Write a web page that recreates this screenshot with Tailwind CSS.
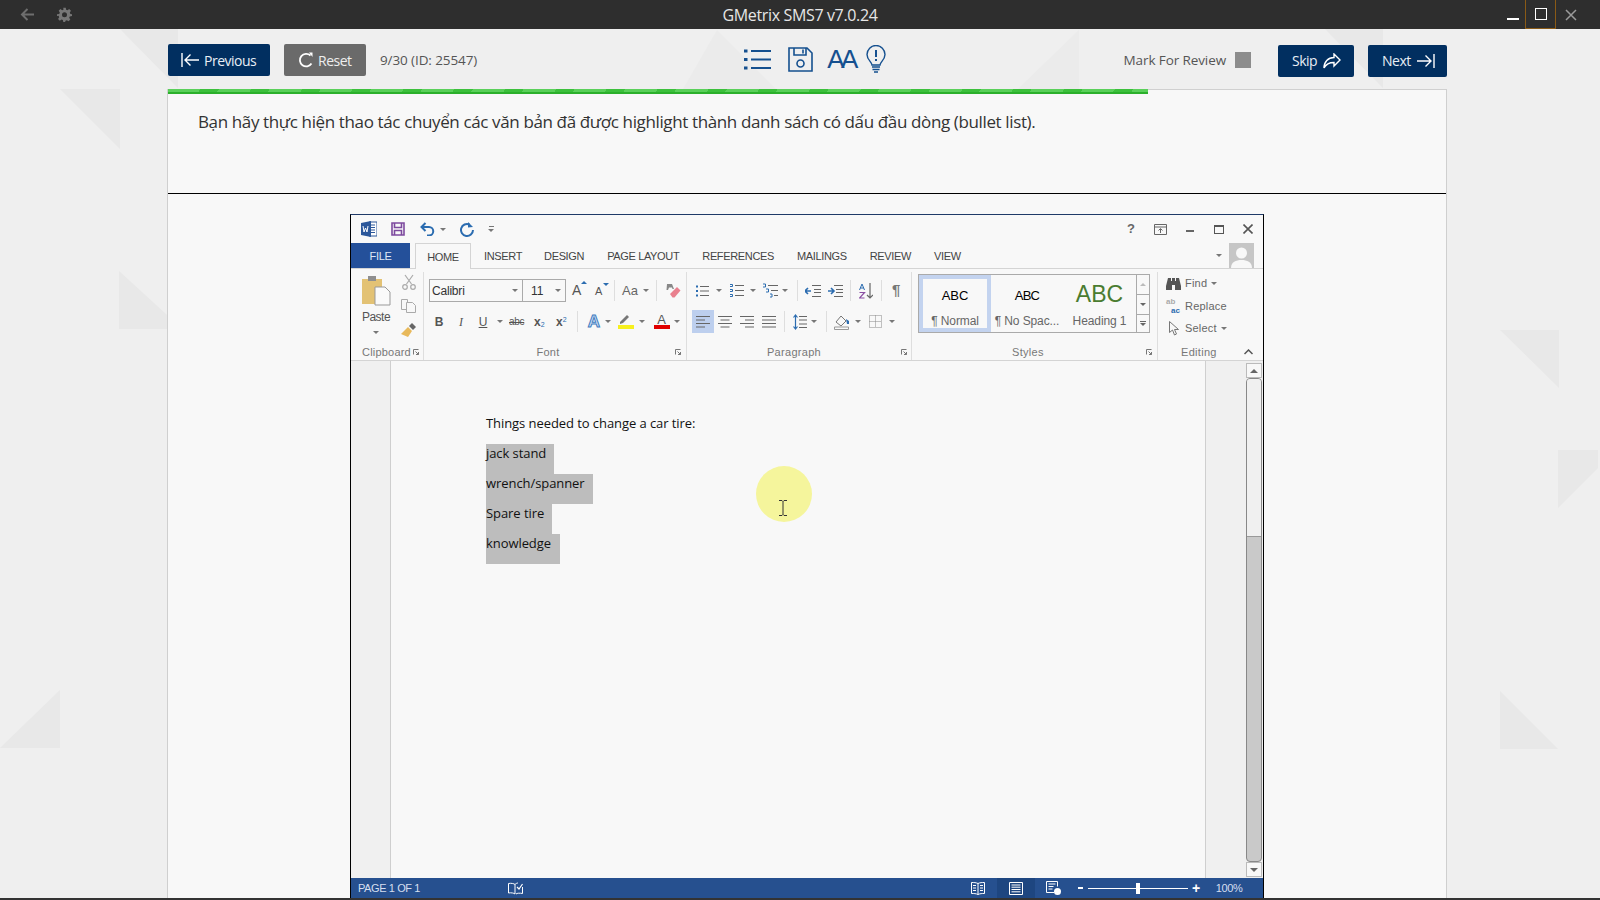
<!DOCTYPE html>
<html lang="vi">
<head>
  <meta charset="UTF-8" />
  <title>GMetrix SMS7</title>
  <script src="https://cdn.jsdelivr.net/npm/@tailwindcss/browser@4"></script>
</head>
<body class="m-0">
<div class="relative w-[1600px] h-[900px] overflow-hidden bg-[#efefef] font-['Open_Sans',sans-serif]">

  <!-- background triangles -->
  <svg class="absolute left-0 top-0" width="1600" height="900" fill="#e8e8e8">
    <polygon points="60,89 120,89 120,149"/>
    <polygon points="120,29 178,29 178,88"/>
    <polygon points="119,271 167,315 167,329 119,329"/>
    <polygon points="0,748 60,690 60,748"/>
    <polygon points="717,30 683,89 776,89" fill="#ebebeb"/>
    <polygon points="1079,30 1018,89 1079,89" fill="#ebebeb"/>
    <polygon points="1325,29 1383,29 1383,88"/>
    <polygon points="1500,330 1559,330 1559,388"/>
    <polygon points="1558,450 1598,450 1598,468 1558,508"/>
    <polygon points="1500,691 1558,749 1500,749"/>
  </svg>

  <div class="relative flex flex-col h-full">
    <!-- title bar -->
    <div class="relative flex items-center justify-center h-[29px] bg-[#2e2e2e] text-[#e6e6e6] text-[16px] tracking-[-0.35px] shrink-0">
      <svg class="absolute left-[20px] top-[7px]" width="15" height="15" viewBox="0 0 15 15" fill="none" stroke="#6e6e6e" stroke-width="2"><path d="M14 7.500H2M7.500 2 2 7.500 7.500 13"/></svg>
      <svg class="absolute left-[57px] top-[7px]" width="15" height="15" viewBox="0 0 24 24" fill="#777"><path d="M10 1h4l.6 3.200 2.200.9L19.500 3.300l2.800 2.800-1.800 2.700.9 2.200L24 11.500v3l-3.600.6-.9 2.200 1.800 2.700-2.800 2.800-2.700-1.800-2.200.9L13 24h-3l-.6-3.100-2.200-.9-2.700 1.800-2.800-2.800 1.800-2.700-.9-2.200L0 14.500v-3l3.600-.5.9-2.200L2.700 6.100l2.800-2.800 2.700 1.800 2.200-.9zM12 8.500a4 4 0 1 0 0 8 4 4 0 0 0 0-8z"/></svg>
      GMetrix SMS7 v7.0.24
      <div class="absolute right-0 top-0 h-[29px] flex">
        <div class="w-[25px] flex items-end justify-center pb-[9px]"><span class="block w-[12px] h-[2px] bg-white"></span></div>
        <div class="w-[31px] h-[29px] border-x border-b border-[#8a5a16] flex items-center justify-center"><span class="block w-[12px] h-[12px] border border-white"></span></div>
        <div class="w-[44px] flex items-center pl-[9px]">
          <svg width="12" height="12" viewBox="0 0 12 12" stroke="#9a9a9a" stroke-width="1.500"><path d="M1 1l10 10M11 1 1 11"/></svg>
        </div>
      </div>
    </div>

    <!-- toolbar -->
    <div class="relative flex items-start h-[60px] pl-[168px] pr-[153px] shrink-0 text-[14px] tracking-[-0.5px]">
      <button class="mt-[15px] flex items-center w-[102px] h-[32px] pl-[13px] rounded-[2px] bg-[#012f60] text-[#e8eef5]">
        <svg width="18" height="16" viewBox="0 0 18 16" fill="none" stroke="#fff" stroke-width="1.400"><path d="M1 1v14M18 8H4M9.500 2.500 4 8l5.500 5.500"/></svg>
        <span class="ml-[5px]">Previous</span>
      </button>
      <button class="mt-[15px] ml-[14px] flex items-center w-[82px] h-[32px] pl-[14px] rounded-[2px] bg-[#6a6a6a] text-[#eeeeee]">
        <svg width="16" height="16" viewBox="0 0 16 16" fill="none" stroke="#fff" stroke-width="1.800"><path d="M13.500 11.500A6.300 6.300 0 1 1 12.500 3.500"/><path d="M11 0.500h3.500V5z" fill="#fff" stroke="none"/></svg>
        <span class="ml-[4px]">Reset</span>
      </button>
      <span class="mt-[15px] ml-[14px] leading-[32px] text-[#555] text-[13.500px] tracking-[-0.1px]">9/30 (ID: 25547)</span>

      <!-- centre icons -->
      <div class="flex items-start ml-[267px] mt-[16px]">
        <svg class="mt-[4px]" width="27" height="21" viewBox="0 0 27 21" fill="none" stroke="#15508f" stroke-width="2"><path d="M7 2h20M7 10.500h20M7 19h20"/><path d="M0 2h3.500M0 10.500h3.500M0 19h3.500" stroke-width="3"/></svg>
        <svg class="ml-[17px] mt-[2px]" width="25" height="25" viewBox="0 0 25 25" fill="none" stroke="#15508f" stroke-width="1.600"><path d="M1 1h18l5 5v18H1z"/><path d="M6 1v7h12V1M15 2.500v4"/><circle cx="12.500" cy="16.500" r="3.500"/></svg>
        <span class="ml-[14px] text-[#15508f] text-[26px] leading-[28px] tracking-[-3.500px] font-['Liberation_Sans',sans-serif]">AA</span>
        <svg class="ml-[11px]" width="20" height="28" viewBox="0 0 20 28" fill="none" stroke="#15508f" stroke-width="1.400"><path d="M6 20c0-3-5-5-5-10.500a9 9 0 0 1 18 0C19 15 14 17 14 20z"/><path d="M10 5v7M10 14v2" stroke-width="2"/><path d="M6 22h8M6.500 24.500h7M8 27h4" stroke-width="1.600"/></svg>
      </div>

      <span class="mt-[15px] ml-auto leading-[32px] text-[#555] text-[13.500px] tracking-[-0.1px]">Mark For Review</span>
      <span class="mt-[23px] ml-[9px] block w-[16px] h-[16px] bg-[#8c8c8c]"></span>
      <button class="mt-[16px] ml-[27px] flex items-center w-[76px] h-[32px] pl-[14px] pb-[1px] rounded-[2px] bg-[#012f60] text-[#e8eef5]">
        <span>Skip</span>
        <svg class="ml-[6px]" width="18" height="16" viewBox="0 0 18 16" fill="none" stroke="#fff" stroke-width="1.400"><path d="M11 1l6 6-6 6V9.500C6 9.500 3 11 1 15c0-6 4-10.500 10-10.500z"/></svg>
      </button>
      <button class="mt-[16px] ml-[14px] flex items-center w-[79px] h-[32px] pl-[14px] pb-[1px] rounded-[2px] bg-[#012f60] text-[#e8eef5]">
        <span>Next</span>
        <svg class="ml-[6px]" width="18" height="16" viewBox="0 0 18 16" fill="none" stroke="#fff" stroke-width="1.400"><path d="M17 1v14M0 8h14M8.500 2.500 14 8l-5.500 5.500"/></svg>
      </button>
    </div>

    <!-- question card -->
    <div class="flex-1 min-h-0 ml-[167px] w-[1280px] border-x border-[#cfcfcf] bg-[#f8f8f8] flex flex-col">
      <div class="h-[5px] shrink-0 flex">
        <div class="w-[980px] flex flex-col">
          <div class="h-[3px] bg-[repeating-linear-gradient(120deg,#5ad05a_0,#5ad05a_28px,#3cc03c_28px,#3cc03c_44px)]"></div>
          <div class="h-[2px] bg-[#2bb02b]"></div>
        </div>
        <div class="flex-1 border-t border-[#d0d0d0]"></div>
      </div>
      <div class="h-[100px] shrink-0 border-b border-black pl-[30px] pt-[15px] text-[17px] leading-[26px] text-[#333] tracking-[-0.37px]">
        Bạn hãy thực hiện thao tác chuyển các văn bản đã được highlight thành danh sách có dấu đầu dòng (bullet list).
      </div>

      <!-- word window -->
      <div class="relative ml-[182px] mt-[20px] w-[914px] h-[684px] shrink-0 border-x border-t border-black border-t-[#1f3a68] bg-[#f8f8f8] flex flex-col font-['Liberation_Sans',sans-serif] text-[#555]">

        <!-- quick access -->
        <div class="relative flex items-center h-[28px] shrink-0 pl-[10px]">
          <svg width="16" height="16" viewBox="0 0 16 16"><path d="M8 1h8v14H8z" fill="#fff" stroke="#2b579a"/><path d="M10 4h4M10 6.500h4M10 9h4M10 11.500h4" stroke="#2b579a"/><path d="M0 2 10 0v16L0 14z" fill="#2b579a"/><path d="M2 5l1 6 1.500-4 1.500 4 1-6" stroke="#fff" fill="none"/></svg>
          <svg class="ml-[14px]" width="14" height="14" viewBox="0 0 14 14" fill="none" stroke="#7d4a9e" stroke-width="1.600"><path d="M1 1h12v12H1z"/><path d="M3.500 1v4.500h7V1M3.500 13V8.500h7V13"/></svg>
          <svg class="ml-[15px]" width="15" height="14" viewBox="0 0 15 14" fill="none" stroke="#2b6cb0" stroke-width="2"><path d="M5.500 1 1.500 5l4 4"/><path d="M2 5h7a4.200 4.200 0 0 1 0 8.500H7"/></svg>
          <span class="ml-[5px] border-x-[3px] border-t-[3px] border-x-transparent border-t-[#777]"></span>
          <svg class="ml-[14px]" width="14" height="15" viewBox="0 0 14 15" fill="none" stroke="#2b6cb0" stroke-width="2"><path d="M9.500 2.500A6 6 0 1 0 13 8"/><path d="M8 0v5.500l5-.5z" fill="#2b6cb0" stroke="none"/></svg>
          <span class="ml-[14px] w-[6px] flex flex-col items-center gap-[2px]"><span class="block w-[5px] h-[1px] bg-[#777]"></span><span class="border-x-[3px] border-t-[3px] border-x-transparent border-t-[#777]"></span></span>

          <div class="ml-auto flex items-center pr-[10px]">
            <span class="text-[13px] font-bold text-[#666] mr-[19px]">?</span>
            <svg class="mr-[19px]" width="13" height="11" viewBox="0 0 13 11" fill="none" stroke="#666"><path d="M.5.500h12v10H.5zM.5 3h12M6.500 9V5M4.500 6.500l2-2 2 2"/></svg>
            <span class="block w-[8px] h-[2px] bg-[#666] mr-[20px] mt-[3px]"></span>
            <span class="block w-[10px] h-[9px] border border-t-2 border-[#555] mr-[19px]"></span>
            <svg width="10" height="10" viewBox="0 0 10 10" stroke="#555" stroke-width="1.600"><path d="M.5.500l9 9M9.500.500l-9 9"/></svg>
          </div>
        </div>

        <!-- tabs -->
        <div class="relative flex items-end h-[26px] shrink-0 border-b border-[#d4d4d4] text-[11px] tracking-[-0.35px] text-[#444]">
          <div class="w-[59px] h-[25px] pt-[1px] bg-[#24509a] text-[#dfe8f6] flex items-center justify-center">FILE</div>
          <div class="ml-[5px] w-[56px] h-[26px] -mb-px pt-[1px] border-x border-t border-[#d4d4d4] bg-[#f8f8f8] flex items-center justify-center">HOME</div>
          <div class="flex h-[25px] pt-[2px] items-center">
            <span class="ml-[13px]">INSERT</span>
            <span class="ml-[22px]">DESIGN</span>
            <span class="ml-[23px]">PAGE LAYOUT</span>
            <span class="ml-[23px]">REFERENCES</span>
            <span class="ml-[23px]">MAILINGS</span>
            <span class="ml-[23px]">REVIEW</span>
            <span class="ml-[23px]">VIEW</span>
          </div>
          <div class="ml-auto flex items-center h-[25px] pr-[9px]">
            <span class="border-x-[3px] border-t-[3px] border-x-transparent border-t-[#777] mr-[7px]"></span>
            <svg width="25" height="25" viewBox="0 0 25 25"><path d="M0 0h25v25H0z" fill="#c6c6c6"/><circle cx="12.500" cy="10" r="5.500" fill="#f8f8f8"/><path d="M2 25c0-6 5-8 10.500-8S23 19 23 25z" fill="#f8f8f8"/></svg>
          </div>
        </div>

        <!-- ribbon -->
        <div class="flex h-[92px] shrink-0 border-b border-[#d4d4d4] text-[#666]">

          <!-- clipboard -->
          <div class="relative w-[73px] mt-[3px] border-r border-[#dedede] flex flex-col">
            <div class="flex flex-1 min-h-0">
              <div class="w-[50px] flex flex-col items-center">
                <svg class="mt-[3px] ml-[1px]" width="29" height="31" viewBox="0 0 29 31"><path d="M0 4h20v25H0z" fill="#e3c274"/><path d="M6 1h8v5H6z" fill="#8f8f8f"/><path d="M13 12h10l5 5v13H13z" fill="#fafafa" stroke="#999"/></svg>
                <span class="mt-[4px] text-[12px] leading-[14px] tracking-[-0.5px] text-[#555]">Paste</span>
                <span class="mt-[7px] border-x-[3px] border-t-[3px] border-x-transparent border-t-[#777]"></span>
              </div>
              <div class="flex flex-col items-center pt-[2px]">
                <svg class="ml-[1px]" width="14" height="16" viewBox="0 0 14 16" fill="none" stroke="#aaa" stroke-width="1.200"><path d="M3 1l6.500 9M11 1 4.500 10"/><circle cx="3" cy="13" r="2.300"/><circle cx="11" cy="13" r="2.300"/></svg>
                <svg class="mt-[9px]" width="15" height="14" viewBox="0 0 15 14" fill="#f8f8f8" stroke="#aaa"><path d="M.5.500h6v10h-6z"/><path d="M5.500 3.500h6l3 3v7h-9z"/></svg>
                <svg class="mt-[10px]" width="15" height="14" viewBox="0 0 15 14"><path d="M0 11 7 4l4 4-4 6z" fill="#e8b95b"/><path d="M8 3l3-3 4 4-3 3z" fill="#666"/></svg>
              </div>
            </div>
            <div class="relative h-[16px] leading-[16px] pl-[11px] text-[11px] tracking-[0.2px] text-[#777]">Clipboard
              <svg class="absolute right-[4px] top-[5px]" width="6" height="6" viewBox="0 0 6 6" fill="none" stroke="#777"><path d="M.5 5.500v-5h5M2.500 2.500l3 3M5.500 3v2.500H3"/></svg>
            </div>
          </div>

          <!-- font -->
          <div class="relative w-[263px] mt-[3px] border-r border-[#dedede] flex flex-col">
            <div class="flex items-center h-[23px] mt-[7px] pl-[5px]">
              <div class="flex items-center justify-between w-[94px] h-[23px] border border-[#aaa] pl-[2px] pr-[4px] text-[12px] tracking-[-0.2px] text-[#333]">Calibri<span class="border-x-[3px] border-t-[3px] border-x-transparent border-t-[#777]"></span></div>
              <div class="flex items-center justify-between w-[43px] h-[23px] border border-l-0 border-[#aaa] pl-[8px] pr-[4px] text-[12px] text-[#333]">11<span class="border-x-[3px] border-t-[3px] border-x-transparent border-t-[#777]"></span></div>
              <span class="relative ml-[6px] w-[14px] text-[14px] text-[#555]">A<span class="absolute right-[-1px] top-[1px] border-x-[3px] border-b-[3px] border-x-transparent border-b-[#2b6cb0]"></span></span>
              <span class="relative ml-[9px] w-[13px] text-[11px] mt-[2px] text-[#555]">A<span class="absolute right-[-1px] top-[0px] border-x-[3px] border-t-[3px] border-x-transparent border-t-[#2b6cb0]"></span></span>
              <span class="ml-[6px] w-px h-[21px] bg-[#dedede]"></span>
              <span class="ml-[7px] w-[18px] text-[13px] text-[#666]">Aa</span>
              <span class="ml-[3px] border-x-[3px] border-t-[3px] border-x-transparent border-t-[#777]"></span>
              <span class="ml-[7px] w-px h-[21px] bg-[#dedede]"></span>
              <svg class="ml-[8px]" width="16" height="16" viewBox="0 0 16 16"><path d="M2 1h5l2 5H7.500L7 4.500H4L3 7H1.500z" fill="#888"/><path d="M5 11l7-7 3.500 3.500-6 7H7.500z" fill="#e9808e"/></svg>
            </div>
            <div class="flex items-center h-[23px] mt-[8px] pl-[5px] text-[#555]">
              <span class="ml-[5px] w-[10px] text-[12px] font-bold text-center">B</span>
              <span class="ml-[13px] w-[8px] text-[12px] italic font-['Liberation_Serif',serif] text-center">I</span>
              <span class="ml-[13px] w-[10px] text-[12px] underline text-center">U</span>
              <span class="ml-[9px] border-x-[3px] border-t-[3px] border-x-transparent border-t-[#777]"></span>
              <span class="ml-[6px] w-[17px] text-[10px] tracking-[-0.3px] line-through">abc</span>
              <span class="ml-[8px] w-[12px] text-[12px] font-bold">x<sub class="text-[7px] text-[#2b6cb0] font-normal">2</sub></span>
              <span class="ml-[10px] w-[13px] text-[12px] font-bold">x<sup class="text-[7px] text-[#2b6cb0] font-normal">2</sup></span>
              <span class="ml-[8px] w-px h-[21px] bg-[#dedede]"></span>
              <span class="ml-[8px] w-[16px] text-[17px] leading-[18px] font-bold text-[#cfe0f5] [-webkit-text-stroke:1px_#3f7cc0] text-center">A</span>
              <span class="ml-[3px] border-x-[3px] border-t-[3px] border-x-transparent border-t-[#777]"></span>
              <svg class="ml-[7px]" width="16" height="15" viewBox="0 0 16 15"><path d="M2 8 9 1l2 2-6 6-3 1z" fill="#777"/><path d="M0 11h16v4H0z" fill="#f7f01e"/></svg>
              <span class="ml-[5px] border-x-[3px] border-t-[3px] border-x-transparent border-t-[#777]"></span>
              <span class="ml-[10px] w-[13px] flex flex-col items-center"><span class="text-[13px] leading-[11px] text-[#555]">A</span><span class="block w-[16px] h-[4px] bg-[#e00000]"></span></span>
              <span class="ml-[6px] border-x-[3px] border-t-[3px] border-x-transparent border-t-[#777]"></span>
            </div>
            <div class="relative mt-auto h-[16px] leading-[16px] pr-[14px] text-center text-[11px] tracking-[0.2px] text-[#777]">Font
              <svg class="absolute right-[5px] top-[5px]" width="6" height="6" viewBox="0 0 6 6" fill="none" stroke="#777"><path d="M.5 5.500v-5h5M2.500 2.500l3 3M5.500 3v2.500H3"/></svg>
            </div>
          </div>

          <!-- paragraph -->
          <div class="relative w-[225px] mt-[3px] border-r border-[#dedede] flex flex-col">
            <div class="flex items-center h-[23px] mt-[7px] pl-[9px]">
              <svg width="13" height="14" viewBox="0 0 13 14" fill="none" stroke="#666"><path d="M4 2.500h9M4 7h9M4 11.500h9"/><path d="M0 2.500h2M0 7h2M0 11.500h2" stroke="#2b6cb0" stroke-width="2"/></svg>
              <span class="ml-[7px] border-x-[3px] border-t-[3px] border-x-transparent border-t-[#777]"></span>
              <svg class="ml-[8px]" width="14" height="15" viewBox="0 0 14 15" fill="none" stroke="#666"><path d="M5 2.500h9M5 7.500h9M5 12.500h9"/><path d="M0 1.500h2.500v2H0M0 6.500h2.500v2H0M0 11.500h2.500v2H0" stroke="#2b6cb0"/></svg>
              <span class="ml-[6px] border-x-[3px] border-t-[3px] border-x-transparent border-t-[#777]"></span>
              <svg class="ml-[7px]" width="15" height="15" viewBox="0 0 15 15" fill="none" stroke="#666"><path d="M5 2.500h10M8 7.500h7M11 12.500h4"/><path d="M0 1h2.500v3H0M3 6h2.500v3H3M7 11h2v3H7" stroke="#2b6cb0"/></svg>
              <span class="ml-[4px] border-x-[3px] border-t-[3px] border-x-transparent border-t-[#777]"></span>
              <span class="ml-[9px] w-px h-[21px] bg-[#dedede]"></span>
              <svg class="ml-[7px]" width="16" height="12" viewBox="0 0 16 12" fill="none" stroke="#666"><path d="M7 .500h9M9 4.500h7M9 7.500h7M7 11.500h9"/><path d="M0 6h6M3 3 0 6l3 3" stroke="#2b6cb0" stroke-width="1.600"/></svg>
              <svg class="ml-[7px]" width="15" height="12" viewBox="0 0 15 12" fill="none" stroke="#666"><path d="M6 .500h9M8 4.500h7M8 7.500h7M6 11.500h9"/><path d="M0 6h6M3 3l3 3-3 3" stroke="#2b6cb0" stroke-width="1.600"/></svg>
              <span class="ml-[7px] w-px h-[21px] bg-[#dedede]"></span>
              <svg class="ml-[8px]" width="14" height="16" viewBox="0 0 14 16" fill="none"><path d="M.5 7 3 1l2.500 6M1.300 5h3.400" stroke="#2b6cb0"/><path d="M.5 9.500h5L.5 15h5" stroke="#8a4fa3" stroke-width="1.200"/><path d="M11 0v15M8 12l3 3 3-3" stroke="#666" stroke-width="1.200"/></svg>
              <span class="ml-[8px] w-px h-[21px] bg-[#dedede]"></span>
              <span class="ml-[10px] text-[15px] font-bold text-[#777]">¶</span>
            </div>
            <div class="flex items-center h-[23px] mt-[8px] pl-[5px]">
              <span class="flex items-center justify-center w-[22px] h-[23px] bg-[#bdcfee]"><svg width="14" height="12" viewBox="0 0 14 12" stroke="#666"><path d="M0 .500h14M0 4h9M0 7.500h14M0 11h9"/></svg></span>
              <svg class="ml-[4px]" width="14" height="12" viewBox="0 0 14 12" stroke="#666"><path d="M0 .500h14M2.500 4h9M0 7.500h14M2.500 11h9"/></svg>
              <svg class="ml-[8px]" width="14" height="12" viewBox="0 0 14 12" stroke="#666"><path d="M0 .500h14M5 4h9M0 7.500h14M5 11h9"/></svg>
              <svg class="ml-[8px]" width="14" height="12" viewBox="0 0 14 12" stroke="#666"><path d="M0 .500h14M0 4h14M0 7.500h14M0 11h14"/></svg>
              <span class="ml-[8px] w-px h-[21px] bg-[#dedede]"></span>
              <svg class="ml-[8px]" width="14" height="16" viewBox="0 0 14 16" fill="none"><path d="M6 2.500h8M6 6h8M6 10h8M6 13.500h8" stroke="#666"/><path d="M2.500 1v14M.5 3.500l2-2.500 2 2.500M.5 12.500l2 2.500 2-2.500" stroke="#2b6cb0" stroke-width="1.200"/></svg>
              <span class="ml-[4px] border-x-[3px] border-t-[3px] border-x-transparent border-t-[#777]"></span>
              <span class="ml-[9px] w-px h-[21px] bg-[#dedede]"></span>
              <svg class="ml-[7px]" width="16" height="16" viewBox="0 0 16 16" fill="none"><path d="M2 8l5-6 5 5-5 5z" stroke="#777"/><path d="M12 5l3 2v3h-2z" fill="#2b6cb0"/><path d="M.5 13h14v2.500H.5z" stroke="#999"/></svg>
              <span class="ml-[5px] border-x-[3px] border-t-[3px] border-x-transparent border-t-[#777]"></span>
              <svg class="ml-[8px]" width="13" height="13" viewBox="0 0 13 13" fill="none" stroke="#888" stroke-dasharray="1 1"><path d="M.5.500h12v12H.5zM.5 6.500h12M6.500.500v12"/></svg>
              <span class="ml-[7px] border-x-[3px] border-t-[3px] border-x-transparent border-t-[#777]"></span>
            </div>
            <div class="relative mt-auto h-[16px] leading-[16px] pr-[10px] text-center text-[11px] tracking-[0.3px] text-[#777]">Paragraph
              <svg class="absolute right-[4px] top-[5px]" width="6" height="6" viewBox="0 0 6 6" fill="none" stroke="#777"><path d="M.5 5.500v-5h5M2.500 2.500l3 3M5.500 3v2.500H3"/></svg>
            </div>
          </div>

          <!-- styles -->
          <div class="relative w-[246px] mt-[3px] border-r border-[#dedede] flex flex-col">
            <div class="ml-[6px] mt-[2px] w-[232px] h-[59px] border border-[#aaa] flex">
              <div class="w-[72px] h-[57px] border-[4px] border-[#c3d3ef] flex flex-col items-center text-[#333]">
                <span class="mt-[9px] text-[13px] leading-[16px] text-black">ABC</span>
                <span class="mt-[10px] text-[12px] leading-[14px] text-[#666] tracking-[-0.1px]">¶ Normal</span>
              </div>
              <div class="w-[72px] flex flex-col items-center">
                <span class="mt-[13px] text-[13px] leading-[16px] text-black tracking-[-0.8px]">ABC</span>
                <span class="mt-[10px] text-[12px] leading-[14px] text-[#666] tracking-[-0.1px]">¶ No Spac...</span>
              </div>
              <div class="w-[73px] flex flex-col items-center">
                <span class="mt-[5px] text-[23px] leading-[28px] text-[#4a7c30]">ABC</span>
                <span class="mt-[6px] text-[12px] leading-[14px] text-[#666] tracking-[-0.1px]">Heading 1</span>
              </div>
              <div class="flex-1 border-l border-[#aaa] flex flex-col">
                <span class="flex items-center justify-center h-[20px] border-b border-[#aaa]"><span class="border-x-[3px] border-b-[3px] border-x-transparent border-b-[#bbb]"></span></span>
                <span class="flex items-center justify-center h-[20px] border-b border-[#aaa]"><span class="border-x-[3px] border-t-[3px] border-x-transparent border-t-[#666]"></span></span>
                <span class="flex flex-col gap-[1px] items-center justify-center flex-1"><span class="block w-[6px] h-px bg-[#666]"></span><span class="border-x-[3px] border-t-[3px] border-x-transparent border-t-[#666]"></span></span>
              </div>
            </div>
            <div class="relative mt-auto h-[16px] leading-[16px] pl-[100px] text-[11px] tracking-[0.3px] text-[#777]">Styles
              <svg class="absolute right-[5px] top-[5px]" width="6" height="6" viewBox="0 0 6 6" fill="none" stroke="#777"><path d="M.5 5.500v-5h5M2.500 2.500l3 3M5.500 3v2.500H3"/></svg>
            </div>
          </div>

          <!-- editing -->
          <div class="relative flex-1 mt-[3px] flex flex-col text-[11px] tracking-[0.2px] text-[#666]">
            <div class="flex items-center h-[16px] mt-[3px] pl-[8px]">
              <svg width="15" height="13" viewBox="0 0 15 13" fill="#555"><path d="M2 1h3v3h1V1h3v3h1V1h3l2 8v4H9V8H6v5H0V9z"/></svg>
              <span class="ml-[4px]">Find</span>
              <span class="ml-[4px] border-x-[3px] border-t-[3px] border-x-transparent border-t-[#777]"></span>
            </div>
            <div class="flex items-center h-[16px] mt-[7px] pl-[8px]">
              <span class="flex flex-col w-[16px] text-[8px] leading-[9px] font-bold tracking-[0px]"><span class="text-[#aaa]">ab</span><span class="pl-[5px] text-[#2b6cb0]">ac</span></span>
              <span class="ml-[3px]">Replace</span>
            </div>
            <div class="flex items-center h-[16px] mt-[6px] pl-[11px]">
              <svg width="10" height="15" viewBox="0 0 10 15" fill="#f8f8f8" stroke="#777"><path d="M.5.500v11l3-2.500 2 5 2-1-2-4.500h4z"/></svg>
              <span class="ml-[6px]">Select</span>
              <span class="ml-[4px] border-x-[3px] border-t-[3px] border-x-transparent border-t-[#777]"></span>
            </div>
            <div class="relative mt-auto h-[16px] leading-[16px] pl-[23px] tracking-[0.3px] text-[#777]">Editing
              <svg class="absolute right-[10px] top-[5px]" width="9" height="6" viewBox="0 0 9 6" fill="none" stroke="#555" stroke-width="1.500"><path d="M.5 5 4.500 1l4 4"/></svg>
            </div>
          </div>
        </div>

        <!-- document area -->
        <div class="flex flex-1 min-h-0">
          <div class="w-[40px] shrink-0 bg-[#f0f0f0] border-r border-[#cfcfcf]"></div>
          <div class="relative flex-1 bg-[#f8f8f8] pl-[95px] pt-[53px] text-[13px] leading-[18px] text-[#111] font-['Open_Sans',sans-serif] tracking-[-0.07px]">
            <div class="h-[30px]">Things needed to change a car tire:</div>
            <div class="h-[30px] w-[68px] bg-[#bdbdbd]">jack stand</div>
            <div class="h-[30px] w-[107px] bg-[#bdbdbd]">wrench/spanner</div>
            <div class="h-[30px] w-[66px] bg-[#bdbdbd]">Spare tire</div>
            <div class="h-[30px] w-[74px] bg-[#bdbdbd]">knowledge</div>
            <!-- mouse highlight and cursor -->
            <div class="absolute left-[365px] top-[105px] w-[56px] h-[56px] rounded-full bg-[#f5f59c]"></div>
            <svg class="absolute left-[388px] top-[139px]" width="8" height="16" viewBox="0 0 8 16" fill="none" stroke="#333"><path d="M0 .500h3l1 1 1-1h3M4 1.500v13M0 15.500h3l1-1 1 1h3"/></svg>
          </div>
          <div class="flex shrink-0 w-[58px] border-l border-[#cfcfcf] bg-[#f0f0f0] pl-[40px] pt-[2px]">
            <div class="w-[16px] flex flex-col">
              <div class="flex items-center justify-center h-[15px] bg-[#f8f8f8] border border-[#bbb]"><span class="border-x-[4px] border-b-[4px] border-x-transparent border-b-[#666]"></span></div>
              <div class="h-[484px] rounded-[4px] border border-[#888] bg-[#c9c9c9] overflow-hidden">
                <div class="h-[158px] bg-[#f0f0f0] border-b border-[#999]"></div>
              </div>
              <div class="flex items-center justify-center h-[15px] bg-[#f8f8f8] border border-[#bbb]"><span class="border-x-[4px] border-t-[4px] border-x-transparent border-t-[#666]"></span></div>
            </div>
          </div>
        </div>

        <!-- status bar -->
        <div class="flex items-center h-[20px] shrink-0 bg-[#26508f] text-[11px] tracking-[-0.4px] text-[#d5dff0]">
          <span class="ml-[7px]">PAGE 1 OF 1</span>
          <svg class="ml-[88px]" width="15" height="13" viewBox="0 0 15 13" fill="none" stroke="#fff"><path d="M7 2.500C6 1.500 3 1 .5 1.500v9.500C3 10.500 6 11 7 12V2.500c1-1 2-1.500 3-1.500M14.500 5v6.500C12 11 9 11 8 12"/><path d="M9 5l2 2 3.500-5" stroke-width="1.200"/></svg>
          <svg class="ml-[448px]" width="14" height="13" viewBox="0 0 14 13" fill="none" stroke="#fff"><path d="M7 1.500C5 .500 3 .500.5.500v11C3 11.500 5 11.500 7 12.500c2-1 4-1 6.500-1V.500C11 .500 9 .500 7 1.500zM7 1.500v11M2 3.500h3M2 6h3M2 8.500h3M9 3.500h3M9 6h3M9 8.500h3"/></svg>
          <div class="ml-[12px] w-[38px] h-[20px] bg-[#1e4680] flex items-center justify-center">
            <svg width="14" height="13" viewBox="0 0 14 13" fill="none" stroke="#fff"><path d="M.5.500h13v12H.5zM2.500 3h9M2.500 5.200h9M2.500 7.500h9M2.500 9.800h9"/></svg>
          </div>
          <svg class="ml-[11px]" width="15" height="14" viewBox="0 0 15 14" fill="none" stroke="#fff"><path d="M8 11.500H.5V.500h11v5M2.500 3h7M2.500 5.500h5M2.500 8h4"/><circle cx="11.500" cy="10.500" r="3.500" fill="#fff" stroke="none"/></svg>
          <span class="ml-[17px] block w-[5px] h-[2px] bg-white"></span>
          <span class="relative ml-[5px] block w-[100px] h-px bg-white"><span class="absolute left-[48px] top-[-5px] block w-[4px] h-[11px] bg-white"></span></span>
          <span class="ml-[4px] text-white text-[14px] font-bold leading-[14px]">+</span>
          <span class="ml-[16px] text-[11px]">100%</span>
        </div>
      </div>
    </div>
  </div>

  <!-- bottom edge of the window -->
  <div class="absolute left-0 bottom-0 w-full h-[2px] bg-[#333]"></div>
</div>
</body>
</html>
